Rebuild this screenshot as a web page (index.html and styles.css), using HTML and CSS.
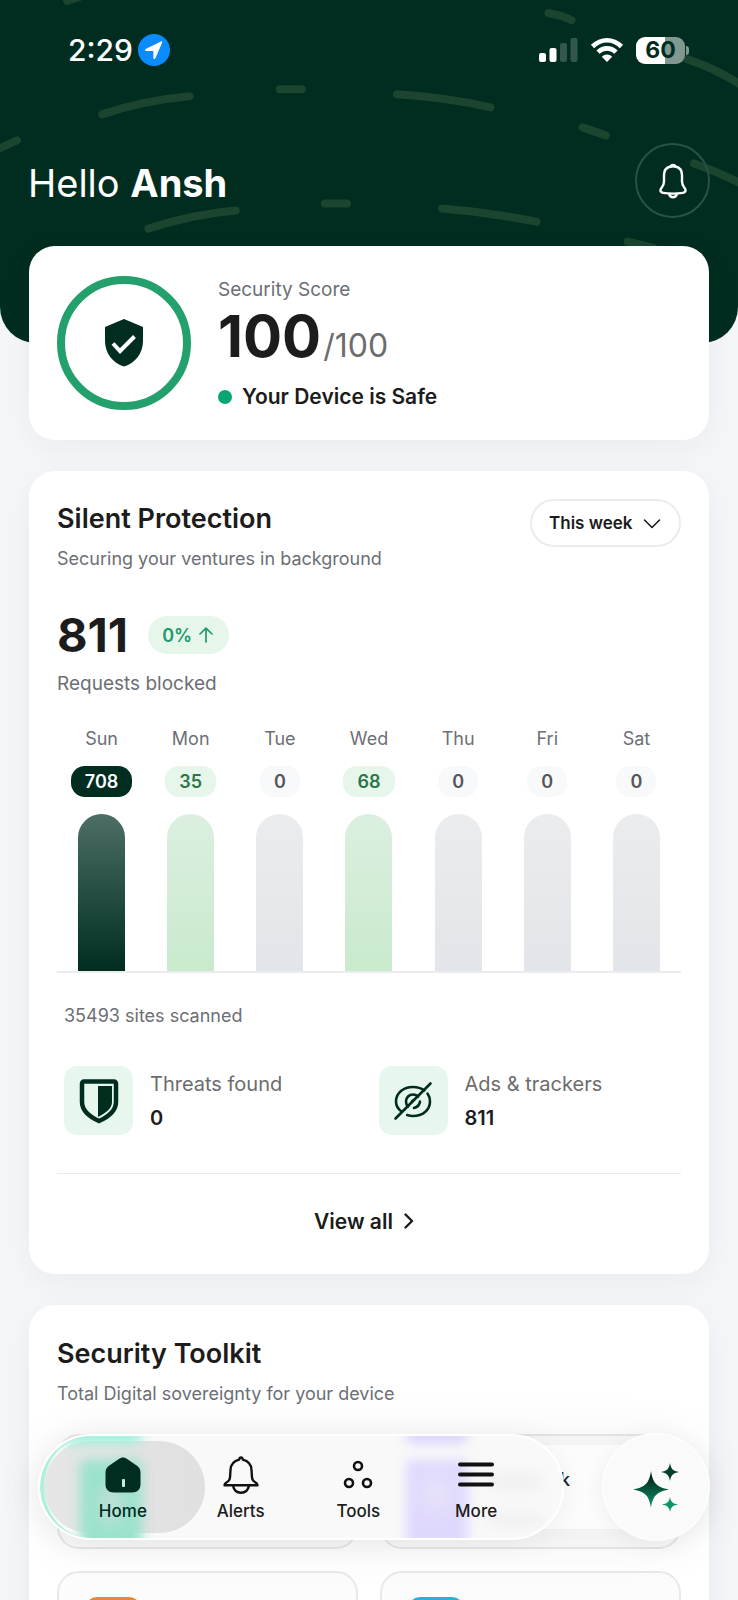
FILE: index.html
```html
<!DOCTYPE html>
<html lang="en">
<head>
  <meta charset="UTF-8">
  <meta name="viewport" content="width=device-width, initial-scale=1">
  <title>Security Dashboard</title>
  <link rel="stylesheet" href="styles.css">
</head>
<body>
  <div class="screen">
    <header class="hero">
      <svg class="hero-lines" viewBox="0 0 738 342" preserveAspectRatio="xMidYMin slice" aria-hidden="true">
        <path d="M68 1L80 -3M548 13Q560 15 571 20M686 59Q714 68 742 86M280 89H302M103 114Q145 100 190 96M397 94Q445 97 490 107M582 127L605 135M-4 150L18 140M693 163Q716 171 742 184M149 228Q192 214 236 210M325 203H347M442 208Q490 212 536 221M627 241L652 247"/>
      </svg>

      <div class="status-bar">
        <div class="status-left">
          <span class="clock">2:29</span>
          <svg width="32" height="32" viewBox="0 0 32 32"><circle cx="16" cy="16" r="16" fill="#0a8cff"/><path d="M24.2 8.6 17.3 24.4c-.5 1.1-1.9.8-1.9-.4V17H8.2c-1.3 0-1.6-1.6-.5-2.1L22.9 7.4c.9-.4 1.7.4 1.3 1.2z" fill="#fff"/></svg>
        </div>
        <div class="status-right">
          <svg width="39" height="26" viewBox="0 0 39 26" fill="#fff"><rect x="0" y="16" width="7" height="9" rx="2"/><rect x="10.5" y="11" width="7" height="14" rx="2"/><rect x="21" y="6" width="7" height="19" rx="2" opacity=".2"/><rect x="31.5" y="1" width="7" height="24" rx="2" opacity=".2"/></svg>
          <svg width="34" height="26" viewBox="0 0 34 26" fill="none" stroke="#fff" stroke-width="4.6"><path d="M2.5 9.5Q9 3.2 17 3.2T31.5 9.5"/><path d="M8 15.2Q12 11.4 17 11.4T26 15.2"/><path d="M17 25 11.8 19.8Q14 17.6 17 17.6T22.2 19.8z" fill="#fff" stroke="none"/></svg>
          <div class="battery"><span>60</span></div>
        </div>
      </div>

      <div class="greeting">
        <h1>Hello <strong>Ansh</strong></h1>
        <button class="bell-btn" aria-label="Notifications">
          <svg width="28" height="36" viewBox="0 0 28 36" fill="none" stroke="#fff" stroke-width="2.4" stroke-linejoin="round"><path d="M14 2c-1.4 0-2 .6-2.6 1.5C7.5 4.5 5 7.6 5 12v6.5c0 3.5-1.3 4.8-2.7 6.7-1.7 2.5-.6 4.3 1.7 4.7 6.5 1 13.5 1 20 0 2.3-.4 3.4-2.2 1.7-4.7-1.4-1.9-2.7-3.2-2.7-6.7V12c0-4.4-2.5-7.5-6.4-8.5C16 2.6 15.4 2 14 2z"/><path d="M10 31c.8 2.3 2 3.2 4 3.2s3.2-.9 4-3.2"/><path d="M11.5 3.8Q14 2.8 16.5 3.8"/></svg>
        </button>
      </div>
    </header>

    <main>
      <section class="card score-card">
        <div class="score-ring">
          <svg width="40" height="48" viewBox="0 0 40 48"><path d="M20 0 39 8v14c0 12-7.5 22-19 25.5C8.5 44 1 34 1 22V8z" fill="#002d20"/><path d="M9 24.500l7 7.500 14.500-14.500" fill="none" stroke="#fff" stroke-width="4"/></svg>
        </div>
        <div class="score-info">
          <p class="muted">Security Score</p>
          <p class="score"><strong>100</strong><span>/100</span></p>
          <p class="safe">Your Device is Safe</p>
        </div>
      </section>

      <section class="card protection">
        <div class="card-head">
          <div>
            <h2>Silent Protection</h2>
            <p class="muted">Securing your ventures in background</p>
          </div>
          <div class="period">
            <select aria-label="Period">
              <option>This week</option>
            </select>
            <svg width="18" height="12" viewBox="0 0 18 12" fill="none" stroke="#1c1c1c" stroke-width="1.6" stroke-linecap="round" stroke-linejoin="round"><path d="M1.5 2 9 9.5 16.5 2"/></svg>
          </div>
        </div>

        <div class="total">
          <strong>811</strong>
          <span class="change">0% <svg width="14" height="16" viewBox="0 0 14 16" fill="none" stroke="#21996a" stroke-width="1.7" stroke-linecap="round" stroke-linejoin="round"><path d="M7 15V1.5M1 7 7 1.2 13 7"/></svg></span>
        </div>
        <p class="muted">Requests blocked</p>

        <div class="chart">
          <div class="day today"><span>Sun</span><b>708</b><i></i></div>
          <div class="day active"><span>Mon</span><b>35</b><i></i></div>
          <div class="day"><span>Tue</span><b>0</b><i></i></div>
          <div class="day active"><span>Wed</span><b>68</b><i></i></div>
          <div class="day"><span>Thu</span><b>0</b><i></i></div>
          <div class="day"><span>Fri</span><b>0</b><i></i></div>
          <div class="day"><span>Sat</span><b>0</b><i></i></div>
        </div>

        <p class="muted scanned">35493 sites scanned</p>

        <div class="stats">
          <div class="stat">
            <div class="stat-icon">
              <svg width="40" height="46" viewBox="0 0 40 46"><path d="M5 3.500h30a2 2 0 0 1 2 2V24c0 8.500-7 14.500-17 19C10 38.500 3 32.500 3 24V5.500a2 2 0 0 1 2-2z" fill="none" stroke="#002d20" stroke-width="4.500"/><path d="M19 8h14v16c0 6-5 10.500-14 15z" fill="#002d20"/></svg>
            </div>
            <div>
              <p class="label">Threats found</p>
              <p class="value">0</p>
            </div>
          </div>
          <div class="stat">
            <div class="stat-icon">
              <svg width="40" height="40" viewBox="0 0 40 40" fill="none" stroke="#002d20" stroke-width="2.6" stroke-linecap="round"><path d="M37.500 2.500 2.500 37.500"/><path d="M8.500 30.500C5 28 3 24.500 3 20.500 3 12 10.500 6 20 6c4.300 0 8.200 1.200 11.300 3.400"/><path d="M34.500 12.500c1.700 2.300 2.500 5 2.500 8C37 29 29.500 35 20 35c-2 0-4-.3-5.800-.9"/><path d="M15 25.500c-1.400-1.300-2-3-2-5 0-4 3-7 7-7 2 0 3.700.7 5 2"/><path d="M19 21a1.500 1.500 0 0 1 1-1.500M27 20.500c-.3 3-2.500 5.500-6 6.500"/></svg>
            </div>
            <div>
              <p class="label">Ads &amp; trackers</p>
              <p class="value">811</p>
            </div>
          </div>
        </div>

        <a class="view-all" href="#">View all <svg width="10" height="16" viewBox="0 0 10 16" fill="none" stroke="#1c1c1c" stroke-width="2.4" stroke-linecap="round" stroke-linejoin="round"><path d="M1.5 1.5 8 8l-6.5 6.5"/></svg></a>
      </section>

      <section class="card toolkit">
        <h2>Security Toolkit</h2>
        <p class="muted">Total Digital sovereignty for your device</p>
        <div class="tiles">
          <div class="tile"></div>
          <div class="tile"><span>k</span></div>
          <div class="tile"><div class="tile-icon orange"></div></div>
          <div class="tile"><div class="tile-icon cyan"></div></div>
        </div>
      </section>
    </main>

    <div class="dock">
      <nav class="tabs">
        <div class="glow glow-teal"></div>
        <div class="glow glow-purple"></div>
        <div class="glow glow-gray"></div>
        <a class="tab current" href="#">
          <svg width="36" height="36" viewBox="0 0 36 36"><path d="M13.5 2.2c3-2.4 6-2.4 9 0l9.500 6.500c2.500 1.900 3.500 3.900 3.500 7V27c0 5.500-3 8.500-8.500 8.500H9C3.500 35.500.5 32.500.5 27V15.700c0-3.100 1-5.100 3.500-7z" fill="#002d20"/><rect x="17" y="22" width="3" height="8" rx="1" fill="#c4ece0"/></svg>
          <span>Home</span>
        </a>
        <a class="tab" href="#">
          <svg width="36" height="38" viewBox="0 0 36 38" fill="none" stroke="#111" stroke-width="2.4" stroke-linejoin="round"><path d="M18 1.5c-1 0-1.6.8-1.8 2.2C10.5 5 7.8 8.5 7.5 14L7 21.5c-.2 2.500-1 3.500-3.200 4.700-1.400.8-2.300 1.700-2.300 3h33c0-1.300-.9-2.200-2.300-3-2.200-1.200-3-2.200-3.200-4.700L28.500 14c-.3-5.500-3-9-8.700-10.300C19.600 2.300 19 1.500 18 1.500z"/><path d="M10 29.500c.8 4.600 3.800 7.200 8 7.200s7.200-2.600 8-7.200"/></svg>
          <span>Alerts</span>
        </a>
        <a class="tab" href="#">
          <svg width="30" height="36" viewBox="0 0 30 36" fill="none" stroke="#111" stroke-width="2.6"><circle cx="15" cy="9" r="4"/><circle cx="6" cy="26" r="4"/><circle cx="24" cy="26" r="4"/></svg>
          <span>Tools</span>
        </a>
        <a class="tab" href="#">
          <svg width="36" height="36" viewBox="0 0 36 36" stroke="#111" stroke-width="4" stroke-linecap="round"><path d="M2 7.5h32M2 17.5h32M2 27.5h32"/></svg>
          <span>More</span>
        </a>
      </nav>
      <button class="ai-btn" aria-label="Assistant">
        <svg width="46" height="50" viewBox="0 0 46 50">
          <defs>
            <linearGradient id="spark" x1="0" y1="0" x2="0" y2="50" gradientUnits="userSpaceOnUse">
              <stop offset=".3" stop-color="#04291e"/>
              <stop offset=".9" stop-color="#0a9468"/>
            </linearGradient>
          </defs>
          <path d="M18 9c2 12 5 16 18 18.500C23 30 20 34 18 46 16 34 13 30 0 27.500 13 25 16 21 18 9z" fill="url(#spark)"/>
          <path d="M37 1c1 6 3 8 9 9-6 1-8 3-9 9-1-6-3-8-9-9 6-1 8-3 9-9z" fill="#053d2b"/>
          <path d="M37 35c1 5 2.500 6.600 8 7.500-5.500.9-7 2.500-8 7.500-1-5-2.500-6.600-8-7.500 5.500-.9 7-2.500 8-7.500z" fill="#0a9468"/>
        </svg>
      </button>
    </div>
  </div>
</body>
</html>
```
FILE: styles.css
```css
* {
  box-sizing: border-box;
}

body {
  margin: 0;
  background-color: #f4f6f9;
  font-family: 'Inter', sans-serif;
  color: #1c1c1c;
}

h1, h2, p {
  margin: 0;
}

button, select {
  font-family: inherit;
  cursor: pointer;
}

a {
  color: inherit;
  text-decoration: none;
}

svg {
  display: block;
  flex-shrink: 0;
}

.screen {
  position: relative;
  height: 100vh;
  overflow: hidden;
}

/* header */
.hero {
  position: relative;
  padding: 32px 28px 125px;
  background-color: #002d20;
  border-radius: 0 0 36px 36px;
  overflow: hidden;
  color: #fff;
}

.hero-lines {
  position: absolute;
  inset: 0;
  width: 100%;
  height: 100%;
  fill: none;
  stroke: #1b452f;
  stroke-width: 8;
  stroke-linecap: round;
}

.status-bar, .greeting {
  position: relative;
  display: flex;
  align-items: center;
  justify-content: space-between;
}

.status-bar {
  height: 36px;
  padding: 0 25px 0 40px;
}

.status-left, .status-right {
  display: flex;
  align-items: center;
}

.status-left {
  gap: 5px;
}

.status-right {
  gap: 12px;
}

.clock {
  font-size: 30px;
  font-weight: 500;
}

.battery {
  position: relative;
  width: 49px;
  height: 27px;
  border-radius: 9px;
  background: linear-gradient(90deg, #fff 60%, #809890 60%);
  color: #002d20;
  font-size: 23px;
  font-weight: 700;
  line-height: 27px;
  text-align: center;
}

.battery::after {
  content: '';
  position: absolute;
  right: -4px;
  top: 9px;
  width: 3px;
  height: 9px;
  border-radius: 0 3px 3px 0;
  background-color: #809890;
}

.greeting {
  margin-top: 75px;
}

.greeting h1 {
  padding-top: 5px;
  font-size: 38px;
  font-weight: 400;
  line-height: 48px;
}

.greeting strong {
  font-weight: 700;
}

.bell-btn {
  display: flex;
  align-items: center;
  justify-content: center;
  width: 75px;
  height: 75px;
  padding: 0;
  background: none;
  border: 2px solid #2b5144;
  border-radius: 50%;
}

/* cards */
main {
  position: relative;
  display: flex;
  flex-direction: column;
  gap: 31px;
  margin-top: -97px;
  padding: 0 29px;
}

.card {
  padding: 28px;
  background-color: #fff;
  border-radius: 26px;
  box-shadow: 0 8px 32px rgba(30, 40, 60, 0.05);
}

.muted {
  color: #6c6f75;
  font-size: 19px;
  line-height: 24px;
}

h2 {
  font-size: 27px;
  font-weight: 600;
  line-height: 32px;
}

.score-card {
  display: flex;
  align-items: center;
  gap: 27px;
  height: 194px;
}

.score-ring {
  display: flex;
  align-items: center;
  justify-content: center;
  width: 134px;
  height: 134px;
  border: 8px solid #24a06c;
  border-radius: 50%;
}

.score-info {
  padding-top: 3px;
}

.score {
  display: flex;
  align-items: baseline;
  margin: 4px 0 7px;
  line-height: 60px;
}

.score strong {
  font-size: 58px;
  font-weight: 700;
}

.score span {
  margin-left: 2px;
  color: #6c6c6c;
  font-size: 32px;
}

.safe {
  display: flex;
  align-items: center;
  gap: 10px;
  font-size: 21px;
  font-weight: 600;
  line-height: 28px;
}

.safe::before {
  content: '';
  width: 14px;
  height: 14px;
  border-radius: 50%;
  background-color: #0aa670;
}

/* silent protection */
.protection {
  padding-bottom: 0;
}

.card-head {
  display: flex;
  align-items: flex-start;
  justify-content: space-between;
}

.card-head h2, .toolkit h2 {
  margin: 4px 0 12px;
}

.card-head .muted, .toolkit .muted, .scanned.muted {
  font-size: 18px;
}

.period {
  position: relative;
}

.period select {
  width: 151px;
  height: 48px;
  padding: 0 40px 0 17px;
  appearance: none;
  background-color: #fff;
  border: 2px solid #ececee;
  border-radius: 24px;
  color: #1c1c1c;
  font-size: 17px;
  font-weight: 600;
}

.period svg {
  position: absolute;
  right: 20px;
  top: 19px;
  pointer-events: none;
}

.total {
  display: flex;
  align-items: center;
  gap: 20px;
  margin-top: 34px;
  margin-bottom: 7px;
}

.total strong {
  font-size: 47px;
  font-weight: 700;
  line-height: 60px;
}

.change {
  display: flex;
  align-items: center;
  gap: 7px;
  height: 38px;
  padding: 0 16px 0 14px;
  background-color: #e6f6eb;
  border-radius: 19px;
  color: #21996a;
  font-size: 18px;
  font-weight: 600;
}

.chart {
  display: grid;
  grid-template-columns: repeat(7, 1fr);
  margin-top: 32px;
  border-bottom: 2px solid #ececee;
}

.day {
  display: flex;
  flex-direction: column;
  align-items: center;
}

.day span {
  color: #6c6f75;
  font-size: 18px;
  line-height: 22px;
}

.day b {
  margin: 16px 0 17px;
  padding: 1px 14px 0;
  background-color: #f8f9fb;
  border-radius: 14px;
  color: #56565a;
  font-size: 18px;
  font-weight: 600;
  line-height: 30px;
}

.day i {
  width: 47px;
  height: 157px;
  border-radius: 24px 24px 0 0;
  background: linear-gradient(#ebecee, #e2e5e9);
}

.active b {
  background-color: #e6f6eb;
  color: #2b7548;
}

.active i {
  background: linear-gradient(#dcefdf, #c9eacd);
}

.today b {
  background-color: #002d20;
  color: #fff;
}

.today i {
  background: linear-gradient(#4c6e66, #002d20);
}

.scanned {
  margin: 31px 7px 38px;
}

.stats {
  display: grid;
  grid-template-columns: 1fr 1fr;
  gap: 12px;
  padding: 0 0 38px 7px;
  border-bottom: 1px solid #e9e9eb;
}

.stat {
  display: flex;
  align-items: center;
  gap: 17px;
}

.stat-icon {
  display: flex;
  align-items: center;
  justify-content: center;
  width: 69px;
  height: 69px;
  background-color: #e8f7ee;
  border-radius: 13px;
}

.label {
  color: #6c6c6c;
  font-size: 20px;
  line-height: 28px;
}

.value {
  margin-top: 6px;
  font-size: 20px;
  font-weight: 600;
  line-height: 28px;
}

.view-all {
  display: flex;
  align-items: center;
  justify-content: center;
  gap: 11px;
  height: 100px;
  padding: 0 10px 6px 0;
  font-size: 21px;
  font-weight: 600;
}

/* toolkit */
.toolkit {
  padding-top: 29px;
}

.tiles {
  display: grid;
  grid-template-columns: 1fr 1fr;
  gap: 22px;
  margin-top: 28px;
}

.tile {
  height: 115px;
  padding: 24px 26px;
  background-color: #fcfcfd;
  border: 2px solid #e9e9ec;
  border-radius: 22px;
}

.tile span {
  display: block;
  padding: 9px 83px 0 0;
  font-size: 18px;
  font-weight: 500;
  text-align: right;
}

.tile-icon {
  width: 56px;
  height: 56px;
  border-radius: 12px;
}

.orange {
  background-color: #e8872e;
}

.cyan {
  background-color: #29b1d3;
}

/* floating bottom bar */
.dock {
  position: absolute;
  left: 38px;
  right: 28px;
  bottom: 59px;
  display: flex;
  align-items: center;
  justify-content: space-between;
  gap: 38px;
}

.dock::before {
  content: '';
  position: absolute;
  inset: 12px;
  border-radius: 54px;
  box-shadow: 0 4px 50px 16px rgba(0, 0, 0, 0.05);
}

.tabs {
  position: relative;
  flex: 1;
  display: grid;
  grid-template-columns: repeat(4, 1fr);
  height: 106px;
  padding: 6px 27px 6px 24px;
  background-color: #f9f9f9;
  border: 2px solid #fff;
  border-radius: 53px;
  box-shadow: 0 4px 30px rgba(0, 0, 0, 0.06);
  overflow: hidden;
}

.tabs::after {
  content: '';
  position: absolute;
  inset: 0;
  border-left: 4px solid #aef0de;
  border-radius: 53px;
  pointer-events: none;
}

/* colours of the tiles showing through the glass */
.glow {
  position: absolute;
  filter: blur(6px);
}

.glow-teal, .glow-purple {
  top: 24px;
  width: 62px;
  height: 90px;
}

.glow-teal::before, .glow-purple::before {
  content: '';
  position: absolute;
  left: 0;
  right: 0;
  top: -36px;
  height: 20px;
  border-radius: 8px;
}

.glow-teal {
  z-index: 1;
  left: 40px;
  background: radial-gradient(ellipse 20px 30px at 50% 50%, #c8e0d8, #9ae2cd);
}

.glow-teal::before {
  left: -20px;
  background-color: #a0f0da;
}

.glow-purple {
  left: 366px;
  background: radial-gradient(ellipse 26px 30px at 50% 38%, #e8e3fa, #dfd8fd);
}

.glow-purple::before {
  background-color: #dcd4fc;
}

.glow-gray {
  left: 448px;
  top: 36px;
  width: 54px;
  height: 54px;
  background: linear-gradient(#f1f1f1 30%, #f8f8f8 40% 65%, #ededed);
}

.tab {
  position: relative;
  display: flex;
  flex-direction: column;
  align-items: center;
  gap: 6px;
  padding-top: 14px;
  font-size: 17px;
  font-weight: 500;
  line-height: 22px;
}

.tab svg {
  height: 38px;
}

.tab svg, .tab span {
  position: relative;
  z-index: 2;
}

.current {
  position: static;
  color: #002d20;
}

.current::before {
  content: '';
  position: absolute;
  left: 4px;
  top: 5px;
  bottom: 5px;
  width: 161px;
  border-radius: 46px;
  background: linear-gradient(90deg, #e6e6e6, #e0e0e0);
}

.ai-btn {
  position: relative;
  display: flex;
  align-items: center;
  justify-content: center;
  width: 108px;
  height: 108px;
  padding: 0;
  background-color: #fafafa;
  border: 2px solid #fdfdfd;
  border-radius: 50%;
  box-shadow: 0 4px 24px rgba(0, 0, 0, 0.06);
}
```
